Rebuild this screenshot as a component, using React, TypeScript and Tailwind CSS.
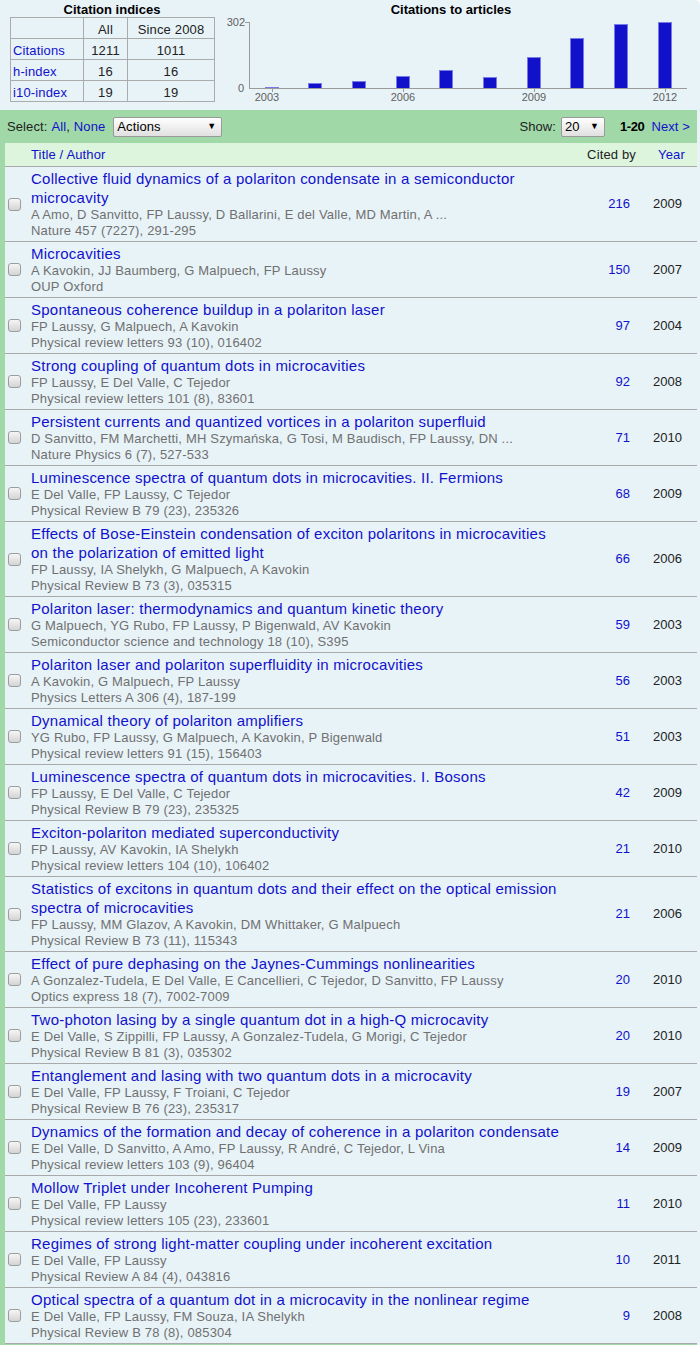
import React from "react";

type Row = { t: string; a: string; v: string; c: string; y: string };

const rows: Row[] = [
  { t: "Collective fluid dynamics of a polariton condensate in a semiconductor microcavity", a: "A Amo, D Sanvitto, FP Laussy, D Ballarini, E del Valle, MD Martin, A ...", v: "Nature 457 (7227), 291-295", c: "216", y: "2009" },
  { t: "Microcavities", a: "A Kavokin, JJ Baumberg, G Malpuech, FP Laussy", v: "OUP Oxford", c: "150", y: "2007" },
  { t: "Spontaneous coherence buildup in a polariton laser", a: "FP Laussy, G Malpuech, A Kavokin", v: "Physical review letters 93 (10), 016402", c: "97", y: "2004" },
  { t: "Strong coupling of quantum dots in microcavities", a: "FP Laussy, E Del Valle, C Tejedor", v: "Physical review letters 101 (8), 83601", c: "92", y: "2008" },
  { t: "Persistent currents and quantized vortices in a polariton superfluid", a: "D Sanvitto, FM Marchetti, MH Szymańska, G Tosi, M Baudisch, FP Laussy, DN ...", v: "Nature Physics 6 (7), 527-533", c: "71", y: "2010" },
  { t: "Luminescence spectra of quantum dots in microcavities. II. Fermions", a: "E Del Valle, FP Laussy, C Tejedor", v: "Physical Review B 79 (23), 235326", c: "68", y: "2009" },
  { t: "Effects of Bose-Einstein condensation of exciton polaritons in microcavities on the polarization of emitted light", a: "FP Laussy, IA Shelykh, G Malpuech, A Kavokin", v: "Physical Review B 73 (3), 035315", c: "66", y: "2006" },
  { t: "Polariton laser: thermodynamics and quantum kinetic theory", a: "G Malpuech, YG Rubo, FP Laussy, P Bigenwald, AV Kavokin", v: "Semiconductor science and technology 18 (10), S395", c: "59", y: "2003" },
  { t: "Polariton laser and polariton superfluidity in microcavities", a: "A Kavokin, G Malpuech, FP Laussy", v: "Physics Letters A 306 (4), 187-199", c: "56", y: "2003" },
  { t: "Dynamical theory of polariton amplifiers", a: "YG Rubo, FP Laussy, G Malpuech, A Kavokin, P Bigenwald", v: "Physical review letters 91 (15), 156403", c: "51", y: "2003" },
  { t: "Luminescence spectra of quantum dots in microcavities. I. Bosons", a: "FP Laussy, E Del Valle, C Tejedor", v: "Physical Review B 79 (23), 235325", c: "42", y: "2009" },
  { t: "Exciton-polariton mediated superconductivity", a: "FP Laussy, AV Kavokin, IA Shelykh", v: "Physical review letters 104 (10), 106402", c: "21", y: "2010" },
  { t: "Statistics of excitons in quantum dots and their effect on the optical emission spectra of microcavities", a: "FP Laussy, MM Glazov, A Kavokin, DM Whittaker, G Malpuech", v: "Physical Review B 73 (11), 115343", c: "21", y: "2006" },
  { t: "Effect of pure dephasing on the Jaynes-Cummings nonlinearities", a: "A Gonzalez-Tudela, E Del Valle, E Cancellieri, C Tejedor, D Sanvitto, FP Laussy", v: "Optics express 18 (7), 7002-7009", c: "20", y: "2010" },
  { t: "Two-photon lasing by a single quantum dot in a high-Q microcavity", a: "E Del Valle, S Zippilli, FP Laussy, A Gonzalez-Tudela, G Morigi, C Tejedor", v: "Physical Review B 81 (3), 035302", c: "20", y: "2010" },
  { t: "Entanglement and lasing with two quantum dots in a microcavity", a: "E Del Valle, FP Laussy, F Troiani, C Tejedor", v: "Physical Review B 76 (23), 235317", c: "19", y: "2007" },
  { t: "Dynamics of the formation and decay of coherence in a polariton condensate", a: "E Del Valle, D Sanvitto, A Amo, FP Laussy, R André, C Tejedor, L Vina", v: "Physical review letters 103 (9), 96404", c: "14", y: "2009" },
  { t: "Mollow Triplet under Incoherent Pumping", a: "E Del Valle, FP Laussy", v: "Physical review letters 105 (23), 233601", c: "11", y: "2010" },
  { t: "Regimes of strong light-matter coupling under incoherent excitation", a: "E Del Valle, FP Laussy", v: "Physical Review A 84 (4), 043816", c: "10", y: "2011" },
  { t: "Optical spectra of a quantum dot in a microcavity in the nonlinear regime", a: "E Del Valle, FP Laussy, FM Souza, IA Shelykh", v: "Physical Review B 78 (8), 085304", c: "9", y: "2008" },
];

const bars = [
  { x: 45, top: 70 },
  { x: 88, top: 66 },
  { x: 132, top: 64 },
  { x: 176, top: 59 },
  { x: 219, top: 53 },
  { x: 263, top: 60 },
  { x: 307, top: 40 },
  { x: 350, top: 21 },
  { x: 394, top: 7 },
  { x: 438, top: 5 },
];

function Checkbox() {
  return (
    <span className="block h-[13px] w-[13px] rounded-[3px] border border-[#9c9c9c] bg-linear-to-b from-[#f6f6f6] to-[#d4d4d4]" />
  );
}

function Chart() {
  return (
    <svg width="480" height="93" viewBox="0 0 480 93" className="block">
      {bars.map((b, i) => (
        <rect
          key={i}
          x={b.x + 0.5}
          y={b.top + 0.5}
          width={13}
          height={71 - b.top}
          fill="#1111cc"
          stroke="#7a7ae6"
          strokeWidth={1}
        />
      ))}
      <line x1="29.5" y1="5" x2="29.5" y2="72" stroke="#9a9a9a" strokeWidth="1" />
      <line x1="25" y1="5.5" x2="29.5" y2="5.5" stroke="#9a9a9a" strokeWidth="1" />
      <line x1="29" y1="71.5" x2="467" y2="71.5" stroke="#9a9a9a" strokeWidth="1" />
      {[52, 183, 314, 445].map((x) => (
        <line key={x} x1={x + 0.5} y1="71.5" x2={x + 0.5} y2="75" stroke="#9a9a9a" strokeWidth="1" />
      ))}
      <g fontFamily="'Liberation Sans', Arial, sans-serif" fontSize="11" fill="#606060">
        <text x="25" y="9" textAnchor="end">302</text>
        <text x="24" y="75" textAnchor="end">0</text>
        <text x="47" y="84" textAnchor="middle">2003</text>
        <text x="183" y="84" textAnchor="middle">2006</text>
        <text x="314" y="84" textAnchor="middle">2009</text>
        <text x="445" y="84" textAnchor="middle">2012</text>
      </g>
    </svg>
  );
}

export default function App() {
  return (
    <div
      className="w-[700px] rounded-tr-[5px] bg-[#e8f3f8] text-[13px] text-[#222]"
      style={{ fontFamily: "'Liberation Sans', Arial, sans-serif" }}
    >
      {/* Top: citation indices + chart */}
      <div className="flex h-[110px]">
        <div className="w-[220px] pl-[10px]">
          <div className="w-[204px] pt-[2px] text-center text-[13px] font-bold leading-[15px] text-black">
            Citation indices
          </div>
          <table className="border-collapse text-[13px] leading-[16px] tracking-[0.15px]">
            <tbody>
              <tr className="h-[21px]">
                <td className="w-[73px] border border-[#ababab]"></td>
                <td className="w-[44px] border border-[#ababab] pt-[4px] text-center">All</td>
                <td className="w-[87px] border border-[#ababab] pt-[4px] text-center">Since 2008</td>
              </tr>
              <tr className="h-[21px]">
                <td className="border border-[#ababab] pl-[2px] pt-[3px] text-[#1111cc]">Citations</td>
                <td className="border border-[#ababab] pt-[3px] text-center">1211</td>
                <td className="border border-[#ababab] pt-[3px] text-center">1011</td>
              </tr>
              <tr className="h-[21px]">
                <td className="border border-[#ababab] pl-[2px] pt-[3px] text-[#1111cc]">h-index</td>
                <td className="border border-[#ababab] pt-[3px] text-center">16</td>
                <td className="border border-[#ababab] pt-[3px] text-center">16</td>
              </tr>
              <tr className="h-[21px]">
                <td className="border border-[#ababab] pl-[2px] pt-[3px] text-[#1111cc]">i10-index</td>
                <td className="border border-[#ababab] pt-[3px] text-center">19</td>
                <td className="border border-[#ababab] pt-[3px] text-center">19</td>
              </tr>
            </tbody>
          </table>
        </div>
        <div className="flex-1">
          <div className="w-[462px] pt-[2px] text-center text-[13px] font-bold leading-[15px] text-black">
            Citations to articles
          </div>
          <Chart />
        </div>
      </div>

      {/* List */}
      <div className="w-[697px] bg-[#a0d8a8] pb-[2px]">
        <div className="flex h-[33px] items-center pl-[7px] pr-[7px] pt-[1px]">
          <span className="tracking-[0.1px]">Select:</span>
          <span className="ml-[4px] tracking-[0.1px] text-[#1111cc]">All</span>
          <span>,</span>
          <span className="ml-[4px] tracking-[0.1px] text-[#1111cc]">None</span>
          <div className="ml-[8px] flex h-[20px] w-[109px] items-center justify-between rounded-[2px] border border-[#9a9a9a] bg-linear-to-b from-white to-[#e0e0e0] pl-[3px] pr-[5px] tracking-[0.1px] text-black">
            <span>Actions</span>
            <span className="text-[9px]">▼</span>
          </div>
          <div className="flex-1" />
          <span className="tracking-[0.1px]">Show:</span>
          <div className="ml-[5px] flex h-[20px] w-[44px] items-center justify-between rounded-[2px] border border-[#9a9a9a] bg-linear-to-b from-white to-[#e0e0e0] pl-[3px] pr-[5px] text-black">
            <span>20</span>
            <span className="text-[9px]">▼</span>
          </div>
          <span className="ml-[15px] font-bold tracking-[-0.4px] text-black">1-20</span>
          <span className="ml-[7px] tracking-[0.1px] text-[#1111cc]">Next &gt;</span>
        </div>
        <div className="ml-[5px] bg-[#e8f3f8]">
          <div className="flex h-[24px] items-center border-b border-[#a9a9a9] bg-[#dcf5dc] tracking-[0.15px]">
            <div className="w-[26px]" />
            <div className="w-[530px] text-[#1111cc]">Title / Author</div>
            <div className="w-[75px] text-right">Cited by</div>
            <div className="flex-1 pl-[22px] text-[#1111cc]">Year</div>
          </div>
          {rows.map((r, i) => (
            <div key={i} className="flex items-center border-b border-[#a9a9a9] pt-[2px] pb-[2px]">
              <div className="w-[26px] pl-[3px]">
                <Checkbox />
              </div>
              <div className="w-[530px]">
                <div className="text-[15px] leading-[19px] tracking-[0.24px] text-[#1111cc]">{r.t}</div>
                <div className="whitespace-nowrap text-[13px] leading-[16px] tracking-[0.18px] text-[#707070]">{r.a}</div>
                <div className="text-[13px] leading-[16px] tracking-[0.18px] text-[#707070]">{r.v}</div>
              </div>
              <div className="w-[69px] text-right text-[#1111cc]">{r.c}</div>
              <div className="flex-1 pl-[23px] text-[#222]">{r.y}</div>
            </div>
          ))}
        </div>
      </div>
    </div>
  );
}
